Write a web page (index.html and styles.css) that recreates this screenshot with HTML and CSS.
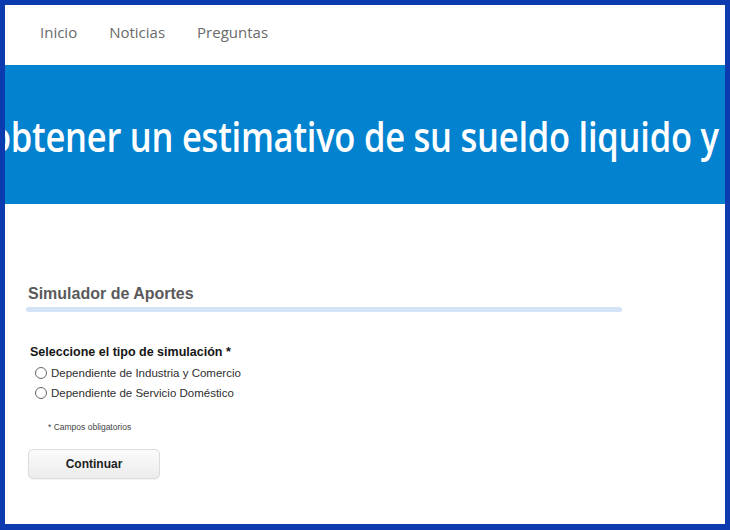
FILE: index.html
```html
<!DOCTYPE html>
<html lang="es">
<head>
<meta charset="utf-8">
<link rel="stylesheet" href="styles.css">
</head>
<body>
<div class="frame">
  <nav class="nav">
    <a class="nav-link" href="#">Inicio</a>
    <a class="nav-link" href="#">Noticias</a>
    <a class="nav-link" href="#">Preguntas</a>
  </nav>
  <header class="banner">
    <h1 class="banner-text">obtener un estimativo de su sueldo liquido y</h1>
  </header>
  <main class="content">
    <h2 class="title">Simulador de Aportes</h2>
    <div class="title-bar"></div>
    <form class="form">
      <p class="question">Seleccione el tipo de simulación *</p>
      <label class="option"><input type="radio" name="tipo" class="radio"><span>Dependiente de Industria y Comercio</span></label>
      <label class="option"><input type="radio" name="tipo" class="radio"><span>Dependiente de Servicio Doméstico</span></label>
      <p class="note">* Campos obligatorios</p>
      <button type="button" class="btn">Continuar</button>
    </form>
  </main>
</div>
</body>
</html>
```
FILE: styles.css
```css
html, body {
  margin: 0;
  padding: 0;
  background: #ffffff;
}
.frame {
  width: 730px;
  height: 530px;
  box-sizing: border-box;
  border: 5px solid #0b3bae;
  border-bottom-width: 6px;
  background: #ffffff;
  overflow: hidden;
  font-family: "Liberation Sans", Arial, sans-serif;
}
.nav {
  height: 60px;
  box-sizing: border-box;
  display: flex;
  align-items: flex-start;
  padding: 16px 0 0 19px;
}
.nav-link {
  font-family: "Open Sans", sans-serif;
  font-size: 15px;
  line-height: 22px;
  color: #6a6a6a;
  text-decoration: none;
  padding: 0 16px;
}
.banner {
  height: 139px;
  background: #0382d0;
  display: flex;
  align-items: center;
  justify-content: flex-start;
  overflow: hidden;
  white-space: nowrap;
}
.banner-text {
  margin: 2px 0 0 -15px;
  font-family: "Open Sans", sans-serif;
  font-weight: 600;
  font-size: 42px;
  letter-spacing: -0.3px;
  color: #ffffff;
  transform: scaleX(0.822);
  transform-origin: left center;
}
.content {
  padding: 79px 0 0 21px;
}
.title {
  margin: 0;
  padding-left: 2px;
  font-size: 16px;
  line-height: 22px;
  font-weight: bold;
  color: #5a5a5a;
}
.title-bar {
  margin-top: 2px;
  width: 596px;
  height: 5px;
  border-radius: 3px;
  background: #d4e3f6;
}
.form {
  padding-left: 4px;
  display: flex;
  flex-direction: column;
  align-items: flex-start;
}
.question {
  margin: 32px 0 3px 0;
  font-size: 12.5px;
  line-height: 16px;
  font-weight: bold;
  color: #151515;
}
.option {
  display: flex;
  align-items: center;
  height: 20px;
  font-size: 11.5px;
  color: #2e2e2e;
}
.radio {
  appearance: none;
  -webkit-appearance: none;
  width: 12px;
  height: 12px;
  margin: 0 4px 0 5px;
  border: 1px solid #666666;
  border-radius: 50%;
  background: #ffffff;
  box-sizing: border-box;
}
.note {
  margin: 18px 0 0 18px;
  font-size: 8.5px;
  line-height: 12px;
  color: #444444;
}
.btn {
  margin: 16px 0 0 -2px;
  width: 132px;
  height: 30px;
  border: 1px solid #dcdcdc;
  border-radius: 5px;
  background: linear-gradient(#fbfbfb, #ececec);
  box-shadow: 0 1px 1px rgba(0,0,0,0.05);
  font-family: "Liberation Sans", Arial, sans-serif;
  font-size: 12px;
  font-weight: bold;
  color: #1e1e1e;
}
```
